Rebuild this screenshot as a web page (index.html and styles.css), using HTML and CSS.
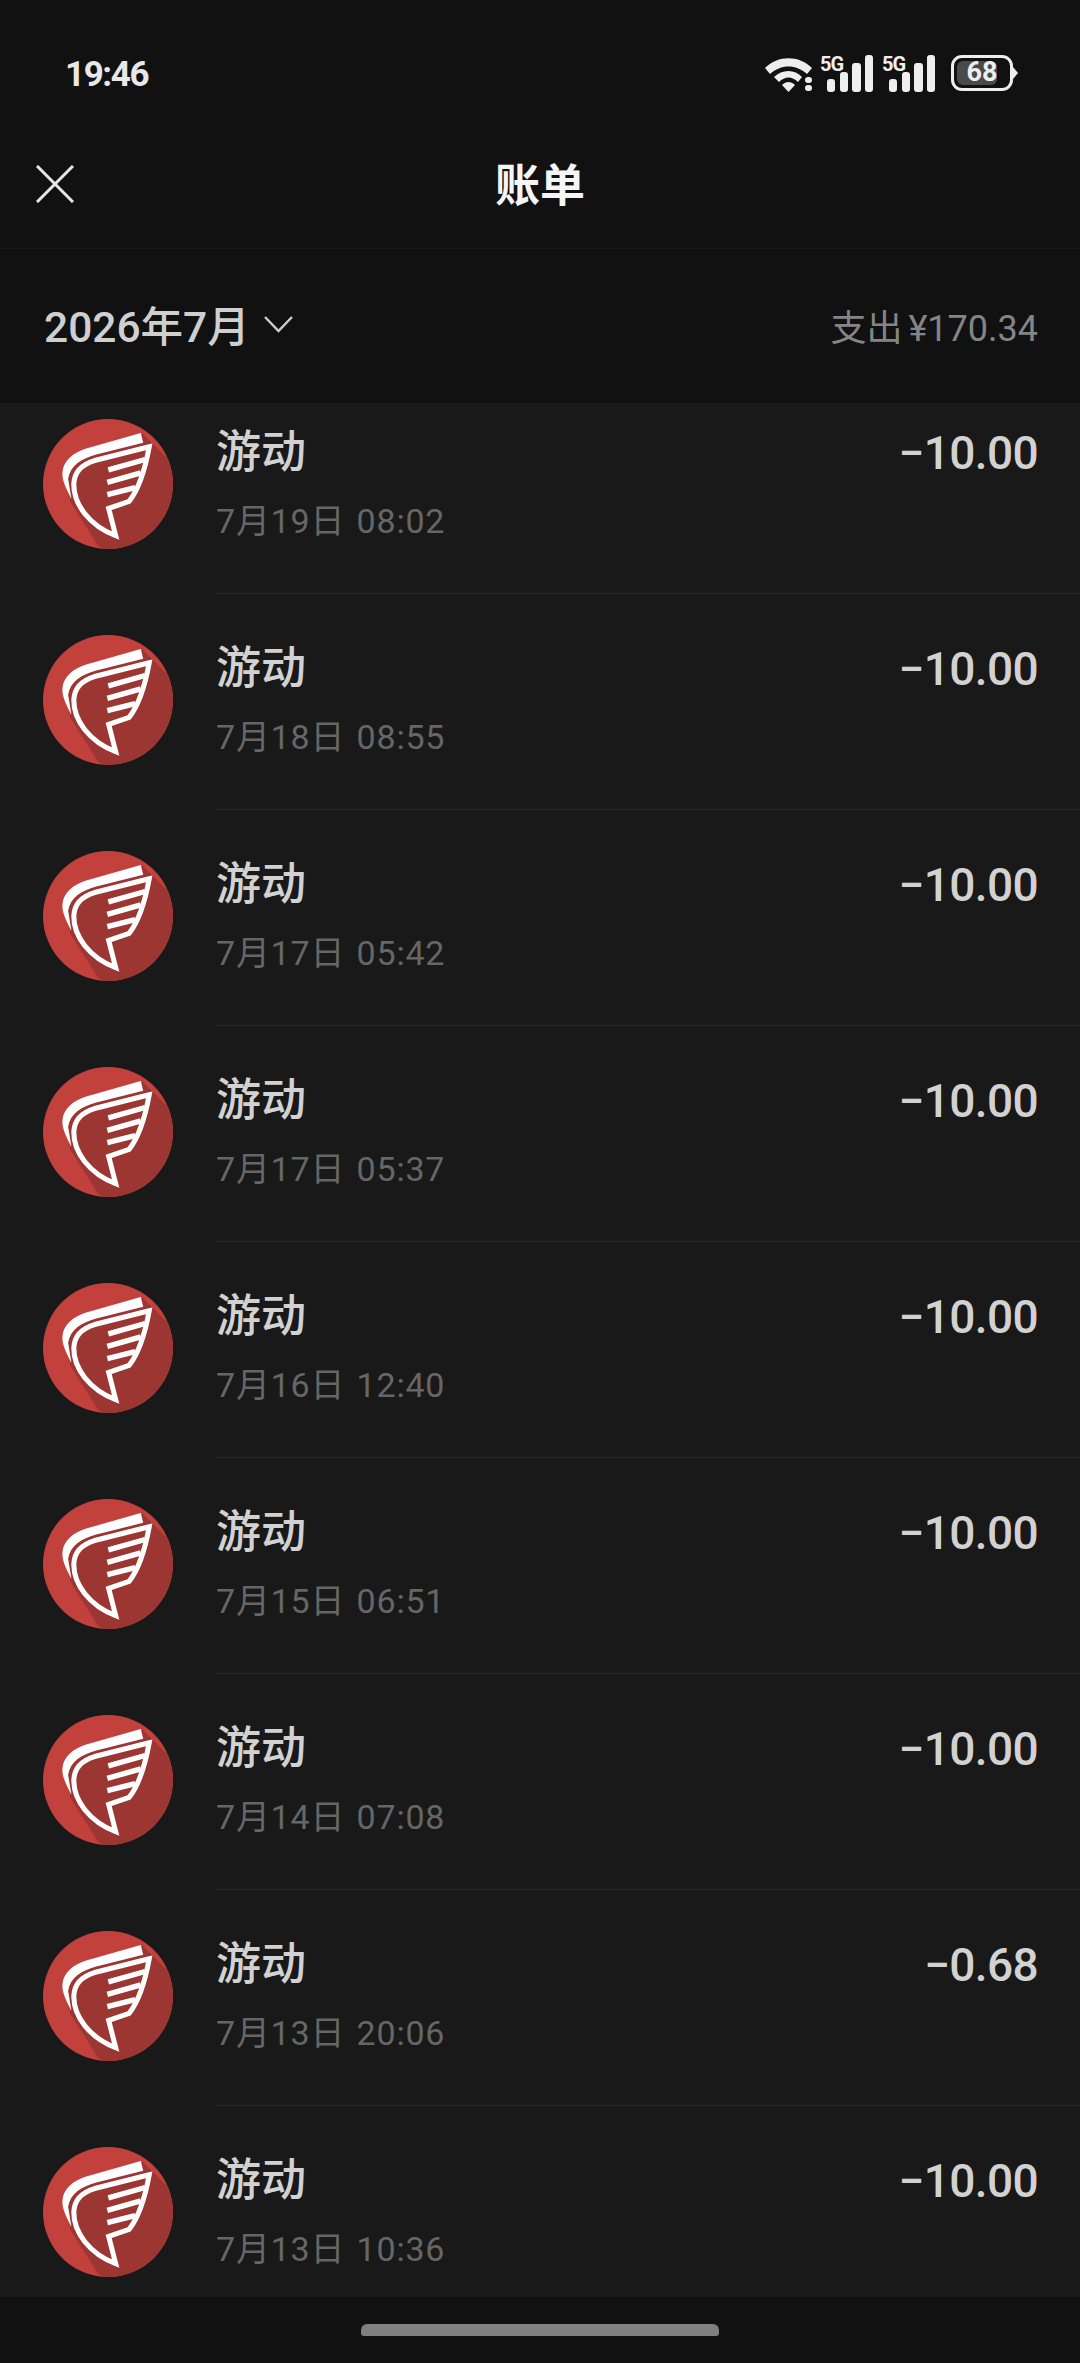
FILE: index.html
```html
<!DOCTYPE html>
<html lang="zh-CN">
<head>
    <meta charset="UTF-8">
    <meta name="viewport" content="width=device-width, initial-scale=1.0">
    <title>账单</title>
    <link rel="stylesheet" href="styles.css">
</head>
<body>

<!-- Wing logo, used by every row -->
<svg class="defs" width="0" height="0">
    <clipPath id="disc"><circle cx="235" cy="240" r="194"/></clipPath>
    <symbol id="wing" viewBox="41 46 388 388">
        <circle cx="235" cy="240" r="194" fill="#c2413c"/>
        <path d="M338 90L500 250V500H340L206 425L122 292L110 200L170 140Z" fill="#9b3632" clip-path="url(#disc)"/>
        <path d="M333 88L340 117L200 152C155 165 122 185 116 225L126 285C112 255 97 232 99 205C102 170 130 147 170 134Z" fill="#fff"/>
        <path d="M358 129L195 170C155 182 134 205 133 240C132 300 180 365 258 394L237 313L298 292C325 258 345 200 358 129Z" fill="none" stroke="#fff" stroke-width="15"/>
        <path d="M236 198L346 167M233 235L333 207M233 272L316 251" stroke="#fff" stroke-width="16" fill="none"/>
    </symbol>
</svg>

<div class="top">
    <div class="statusbar">
        <span class="clock">19:46</span>
        <div class="status-icons">
            <svg class="wifi" width="48" height="38" viewBox="0 0 48 38">
                <path d="M0 13C13 0 34 0 47 13L42 19C31 9 16 9 5 19Z" fill="#eee"/>
                <path d="M9 22C17 14 30 14 37 22L33 27C27 21 20 21 14 27Z" fill="#eee"/>
                <path d="M17 30C21 26 26 26 30 30L23.500 37Z" fill="#eee"/>
                <rect x="40" y="22" width="7" height="6" rx="3" fill="#eee"/>
                <rect x="40" y="30" width="7" height="6" rx="3" fill="#eee"/>
            </svg>
            <div class="signal">
                <span class="net">5G</span>
                <svg width="48" height="38" viewBox="0 0 48 38">
                    <rect x="1" y="24" width="8" height="13" rx="3" fill="#eee"/>
                    <rect x="14" y="17" width="8" height="20" rx="3" fill="#eee"/>
                    <rect x="26" y="8" width="9" height="29" rx="3" fill="#eee"/>
                    <rect x="39" y="0" width="8" height="37" rx="3" fill="#eee"/>
                </svg>
            </div>
            <div class="signal">
                <span class="net">5G</span>
                <svg width="48" height="38" viewBox="0 0 48 38">
                    <rect x="1" y="24" width="8" height="13" rx="3" fill="#eee"/>
                    <rect x="14" y="17" width="8" height="20" rx="3" fill="#eee"/>
                    <rect x="26" y="8" width="9" height="29" rx="3" fill="#eee"/>
                    <rect x="39" y="0" width="8" height="37" rx="3" fill="#eee"/>
                </svg>
            </div>
            <div class="battery">
                <div class="battery-body">
                    <div class="battery-level"></div>
                    <span class="battery-text">68</span>
                </div>
                <div class="battery-nub"></div>
            </div>
        </div>
    </div>

    <div class="titlebar">
        <svg class="close" width="38" height="38" viewBox="0 0 38 38">
            <path d="M1 1L37 37M37 1L1 37" stroke="#e8e8e8" stroke-width="3" fill="none"/>
        </svg>
        <h1>账单</h1>
    </div>

    <div class="summary">
        <div class="month">
            <span>2026年7月</span>
            <svg width="29" height="18" viewBox="0 0 29 18">
                <path d="M1 2L14.500 16L28 2" stroke="#ccc" stroke-width="2.500" fill="none"/>
            </svg>
        </div>
        <span class="total">支出 ¥170.34</span>
    </div>
</div>

<div class="list">
    <div class="row row-first">
        <svg class="avatar"><use href="#wing"/></svg>
        <div class="row-body">
            <div class="row-text"><span class="name">游动</span><span class="date">7月19日 08:02</span></div>
            <span class="amount">−10.00</span>
        </div>
    </div>
    <div class="row">
        <svg class="avatar"><use href="#wing"/></svg>
        <div class="row-body">
            <div class="row-text"><span class="name">游动</span><span class="date">7月18日 08:55</span></div>
            <span class="amount">−10.00</span>
        </div>
    </div>
    <div class="row">
        <svg class="avatar"><use href="#wing"/></svg>
        <div class="row-body">
            <div class="row-text"><span class="name">游动</span><span class="date">7月17日 05:42</span></div>
            <span class="amount">−10.00</span>
        </div>
    </div>
    <div class="row">
        <svg class="avatar"><use href="#wing"/></svg>
        <div class="row-body">
            <div class="row-text"><span class="name">游动</span><span class="date">7月17日 05:37</span></div>
            <span class="amount">−10.00</span>
        </div>
    </div>
    <div class="row">
        <svg class="avatar"><use href="#wing"/></svg>
        <div class="row-body">
            <div class="row-text"><span class="name">游动</span><span class="date">7月16日 12:40</span></div>
            <span class="amount">−10.00</span>
        </div>
    </div>
    <div class="row">
        <svg class="avatar"><use href="#wing"/></svg>
        <div class="row-body">
            <div class="row-text"><span class="name">游动</span><span class="date">7月15日 06:51</span></div>
            <span class="amount">−10.00</span>
        </div>
    </div>
    <div class="row">
        <svg class="avatar"><use href="#wing"/></svg>
        <div class="row-body">
            <div class="row-text"><span class="name">游动</span><span class="date">7月14日 07:08</span></div>
            <span class="amount">−10.00</span>
        </div>
    </div>
    <div class="row">
        <svg class="avatar"><use href="#wing"/></svg>
        <div class="row-body">
            <div class="row-text"><span class="name">游动</span><span class="date">7月13日 20:06</span></div>
            <span class="amount">−0.68</span>
        </div>
    </div>
    <div class="row">
        <svg class="avatar"><use href="#wing"/></svg>
        <div class="row-body">
            <div class="row-text"><span class="name">游动</span><span class="date">7月13日 10:36</span></div>
            <span class="amount">−10.00</span>
        </div>
    </div>
</div>

<div class="homebar"><div class="home-pill"></div></div>

</body>
</html>
```

FILE: styles.css
```css
* {
    margin: 0;
    padding: 0;
    box-sizing: border-box;
}

body {
    width: 1080px;
    height: 2363px;
    display: flex;
    flex-direction: column;
    overflow: hidden;
    background-color: #111112;
    color: #d0d0d0;
    font-family: "Roboto", "Noto Sans CJK SC", sans-serif;
}

.defs {
    position: absolute;
}

/* Status bar */
.statusbar {
    height: 130px;
    padding: 56px 62px 0 65px;
    display: flex;
    justify-content: space-between;
    align-items: flex-start;
}

.clock {
    font-size: 35px;
    line-height: 38px;
    font-weight: 700;
    letter-spacing: -1.400px;
    color: #e8e8e8;
}

.status-icons {
    display: flex;
    align-items: flex-start;
    margin-top: -1px;
}

.wifi {
    margin-right: 6px;
}

.signal {
    position: relative;
    width: 62px;
    padding-left: 7px;
}

.net {
    position: absolute;
    top: -1px;
    left: 1px;
    font-size: 20px;
    line-height: 20px;
    font-weight: 700;
    color: #eee;
    letter-spacing: -1px;
}

.battery {
    display: flex;
    align-items: center;
    height: 36px;
    margin-left: 8px;
}

.battery-body {
    position: relative;
    width: 62px;
    height: 36px;
    border: 3px solid #eee;
    border-radius: 11px;
    padding: 3px;
}

.battery-level {
    width: 40px;
    height: 24px;
    background-color: #4a4a4a;
    border-radius: 6px;
}

.battery-text {
    position: absolute;
    top: 0;
    left: 0;
    width: 100%;
    text-align: center;
    font-size: 27px;
    line-height: 29px;
    font-weight: 700;
    color: #eee;
}

.battery-nub {
    width: 5px;
    height: 12px;
    background-color: #eee;
    clip-path: polygon(0 0, 100% 50%, 0 100%);
}

/* Title */
.titlebar {
    position: relative;
    height: 119px;
    padding: 35px 0 0 36px;
    border-bottom: 1px solid #181818;
}

.titlebar h1 {
    position: absolute;
    top: 34px;
    left: 0;
    width: 100%;
    text-align: center;
    font-size: 45px;
    line-height: 46px;
    font-weight: 700;
    color: #f5f5f5;
}

.close {
    display: block;
}

/* Month and total */
.summary {
    height: 154px;
    padding: 0 42px 0 44px;
    display: flex;
    justify-content: space-between;
    align-items: center;
}

.month {
    display: flex;
    align-items: center;
    gap: 14px;
    margin-bottom: 5px;
    font-size: 42.500px;
    font-weight: 500;
    color: #cfcfcf;
}

.total {
    margin-bottom: 2px;
    font-size: 36px;
    word-spacing: -3px;
    color: #858585;
}

/* List */
.list {
    flex: 1;
    min-height: 0;
    overflow: hidden;
    background-color: #191919;
}

.row {
    height: 216px;
    display: flex;
    gap: 43px;
    padding-left: 43px;
}

.row-first {
    height: 191px;
}

.avatar {
    flex: none;
    width: 130px;
    height: 130px;
    margin-top: 41px;
}

.row-first .avatar {
    margin-top: 16px;
}

.row-body {
    flex: 1;
    display: flex;
    justify-content: space-between;
    align-items: flex-start;
    padding: 39px 42px 0 0;
    border-bottom: 1px solid #2a2a2a;
}

.row-first .row-body {
    padding-top: 14px;
}

.row-text {
    display: flex;
    flex-direction: column;
    gap: 18px;
}

.name {
    font-size: 45px;
    line-height: 56px;
    font-weight: 500;
    color: #d2d2d2;
    margin-top: 8px;
}

.date {
    font-size: 34px;
    line-height: 44px;
    letter-spacing: 0.800px;
    word-spacing: 2px;
    color: #666;
}

.amount {
    font-size: 46px;
    line-height: 56px;
    font-weight: 500;
    letter-spacing: -0.600px;
    color: #d2d2d2;
    margin-top: 8px;
}

/* Gesture bar */
.homebar {
    height: 66px;
    display: flex;
    justify-content: center;
    padding-top: 27px;
}

.home-pill {
    width: 358px;
    height: 12px;
    border-radius: 6px 6px 3px 3px;
    background-color: #808080;
}
```
